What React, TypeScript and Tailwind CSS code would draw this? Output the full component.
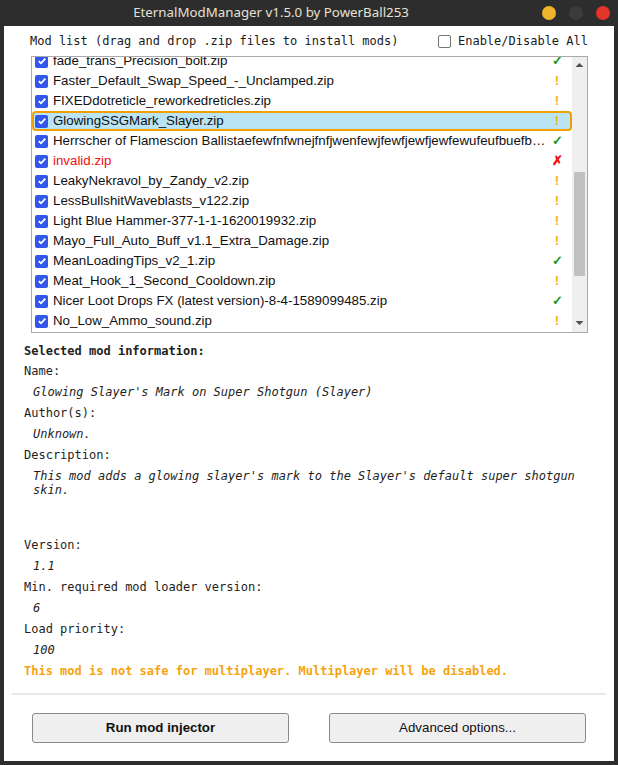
import React from "react";

type Mod = { name: string; status: "ok" | "warn" | "bad"; invalid?: boolean };

const mods: Mod[] = [
  { name: "fade_trans_Precision_bolt.zip", status: "ok" },
  { name: "Faster_Default_Swap_Speed_-_Unclamped.zip", status: "warn" },
  { name: "FIXEDdotreticle_reworkedreticles.zip", status: "warn" },
  { name: "GlowingSSGMark_Slayer.zip", status: "warn" },
  {
    name: "Herrscher of Flamescion Ballistaefewfnfwnejfnfjwenfewjfewfjewfjewfewufeufbuefbwefbwe.zip",
    status: "ok",
  },
  { name: "invalid.zip", status: "bad", invalid: true },
  { name: "LeakyNekravol_by_Zandy_v2.zip", status: "warn" },
  { name: "LessBullshitWaveblasts_v122.zip", status: "warn" },
  { name: "Light Blue Hammer-377-1-1-1620019932.zip", status: "warn" },
  { name: "Mayo_Full_Auto_Buff_v1.1_Extra_Damage.zip", status: "warn" },
  { name: "MeanLoadingTips_v2_1.zip", status: "ok" },
  { name: "Meat_Hook_1_Second_Cooldown.zip", status: "warn" },
  { name: "Nicer Loot Drops FX (latest version)-8-4-1589099485.zip", status: "ok" },
  { name: "No_Low_Ammo_sound.zip", status: "warn" },
];

const mono = "font-['DejaVu_Sans_Mono',monospace] text-[12px]";

const Check = ({ checked }: { checked: boolean }) =>
  checked ? (
    <span className="w-[13px] h-[13px] shrink-0 rounded-[2px] bg-[#3157ec] flex items-center justify-center">
      <svg width="10" height="10" viewBox="0 0 10 10">
        <path d="M1.8 5.2 L4 7.3 L8.3 2.6" fill="none" stroke="#fff" strokeWidth="1.8" />
      </svg>
    </span>
  ) : (
    <span className="w-[13px] h-[13px] shrink-0 rounded-[2px] border border-[#767676] bg-white" />
  );

const Status = ({ s }: { s: Mod["status"] }) => {
  if (s === "ok") return <span className="text-[#1a9b2c] font-bold">✓</span>;
  if (s === "bad") return <span className="text-[#ee1111] font-bold">✗</span>;
  return <span className="text-[#f3b21a] font-bold">!</span>;
};

const Row = ({ mod, selected }: { mod: Mod; selected: boolean }) => (
  <div
    className={
      "h-[20px] flex items-center " +
      (selected ? "bg-[#bae3f4] border-2 border-[#f0a000] rounded-[4px] pl-[1px]" : "pl-[3px]")
    }
  >
    <Check checked />
    <span
      className={
        "ml-[5px] flex-1 truncate text-[13.3px] " + (mod.invalid ? "text-[#ee1111]" : "text-[#111]")
      }
    >
      {mod.name}
    </span>
    <span className={"w-[20px] shrink-0 text-center text-[13px] " + (selected ? "mr-[3px]" : "mr-[5px]")}>
      <Status s={mod.status} />
    </span>
  </div>
);

const Label = ({ children }: { children: React.ReactNode }) => (
  <div className="h-[21px] leading-[21px]">{children}</div>
);

const Value = ({ children }: { children: React.ReactNode }) => (
  <div className="h-[21px] leading-[21px] pl-[9px] italic">{children}</div>
);

export default function App() {
  return (
    <div className="w-[618px] h-[765px] bg-[#2d2d2d] flex flex-col">
      <div className="h-[26px] flex items-center">
        <div className="w-[545px] text-center font-['Noto_Sans',sans-serif] text-[13.3px] text-[#e6e0d4]">
          EternalModManager v1.5.0 by PowerBall253
        </div>
        <div className="ml-auto mr-[8px] flex gap-[13px]">
          <span className="w-[14px] h-[14px] rounded-full bg-[#f0b52a]" />
          <span className="w-[14px] h-[14px] rounded-full bg-[#3b3b3b]" />
          <span className="w-[14px] h-[14px] rounded-full bg-[#e5352b]" />
        </div>
      </div>

      <div className="mx-[4px] mb-[4px] flex-1 bg-white flex flex-col font-['Liberation_Sans',Arial,sans-serif]">
        <div className={"h-[30px] flex items-center justify-between pl-[26px] pr-[26px] text-[#1a1a1a] " + mono}>
          <span>Mod list (drag and drop .zip files to install mods)</span>
          <span className="flex items-center gap-[7px]">
            <Check checked={false} />
            <span>Enable/Disable All</span>
          </span>
        </div>

        <div className="ml-[27px] w-[557px] h-[277px] border border-[#a9a9a9] flex">
          <div className="flex-1 overflow-hidden">
            <div className="-mt-[6px]">
              {mods.map((m, i) => (
                <Row key={m.name} mod={m} selected={i === 3} />
              ))}
            </div>
          </div>
          <div className="w-[15px] bg-[#efefef] flex flex-col items-center">
            <svg width="9" height="6" viewBox="0 0 9 6" className="mt-[5px]">
              <path d="M0.5 5 L4.5 1 L8.5 5 Z" fill="#505050" />
            </svg>
            <div className="mt-[104px] w-[11px] h-[104px] bg-[#c1c1c1]" />
            <svg width="9" height="6" viewBox="0 0 9 6" className="mt-auto mb-[6px]">
              <path d="M0.5 1 L4.5 5 L8.5 1 Z" fill="#505050" />
            </svg>
          </div>
        </div>

        <div className={"mt-[8px] pl-[20px] pr-[20px] text-[#1e1e1e] " + mono}>
          <div className="h-[20px] leading-[20px]">
            <b>Selected mod information:</b>
          </div>
          <Label>Name:</Label>
          <Value>Glowing Slayer's Mark on Super Shotgun (Slayer)</Value>
          <Label>Author(s):</Label>
          <Value>Unknown.</Value>
          <Label>Description:</Label>
          <div className="h-[69px] pt-[3px] leading-[14px] pl-[9px] italic">
            This mod adds a glowing slayer's mark to the Slayer's default super shotgun skin.
          </div>
          <Label>Version:</Label>
          <Value>1.1</Value>
          <Label>Min. required mod loader version:</Label>
          <Value>6</Value>
          <Label>Load priority:</Label>
          <Value>100</Value>
          <div className="h-[21px] leading-[21px] font-bold text-[#f5a30f]">
            This mod is not safe for multiplayer. Multiplayer will be disabled.
          </div>
        </div>

        <div className="mt-[11px] mx-[8px] h-[2px] bg-[#e8e8e8]" />

        <div className="mt-[18px] px-[28px] flex justify-between">
          <button className="w-[257px] h-[30px] bg-[#efefef] border border-[#8a8a8a] rounded-[3px] text-[13.3px] font-bold text-[#111]">
            Run mod injector
          </button>
          <button className="w-[257px] h-[30px] bg-[#efefef] border border-[#8a8a8a] rounded-[3px] text-[13.3px] text-[#111]">
            Advanced options...
          </button>
        </div>
      </div>
    </div>
  );
}
